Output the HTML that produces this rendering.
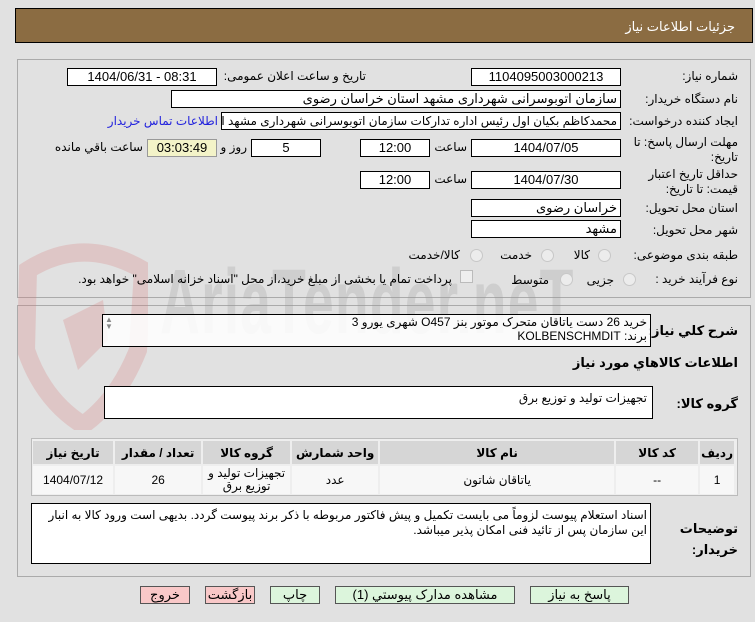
<!DOCTYPE html>
<html><head><meta charset="utf-8"><style>
body{margin:0;width:755px;height:622px;background:#e1e1e1;font-family:"Liberation Sans","DejaVu Sans",sans-serif;font-size:12px;color:#000;position:relative;overflow:hidden}
.a{position:absolute}
.box{position:absolute;background:#fff;border:1px solid #000;box-sizing:border-box;text-align:center;line-height:16px;font-size:13px}
.lbl{position:absolute;direction:rtl;white-space:nowrap;font-size:12px}
.rad{position:absolute;width:11px;height:11px;border-radius:50%;border:1px solid #c8c8c8;background:#ececec}
.btn{position:absolute;border:1px solid #555;box-sizing:border-box;text-align:center;line-height:16px;font-size:13px;background:#dcf5dc}
table{border-collapse:separate;border-spacing:2px}
td{text-align:center;font-size:12px}
</style></head><body>
<div class="a" style="left:15px;top:8px;width:738px;height:35px;background:#8b6c42;border:1px solid #000;box-sizing:border-box"></div>
<div class="lbl" style="right:20px;top:19px;color:#fff;font-size:13px">جزئیات اطلاعات نیاز</div>

<div class="a" style="left:17px;top:59px;width:734px;height:239px;border:1px solid #aaa;box-sizing:border-box"></div>
<div class="a" style="left:17px;top:305px;width:734px;height:272px;border:1px solid #aaa;box-sizing:border-box"></div>

<!-- watermark -->
<svg class="a" style="left:18px;top:240px" width="130" height="190" viewBox="0 0 130 190"><path d="M10 30 Q65 -5 125 30 L120 110 Q100 160 65 185 Q25 160 8 110 Z" fill="none" stroke="rgba(215,120,120,0.25)" stroke-width="18"/><path d="M45 80 L85 60 L90 100 L60 130 Z" fill="rgba(215,120,120,0.25)"/></svg>
<div class="a" style="left:160px;top:250px;font-size:92px;font-weight:bold;color:rgba(150,150,150,0.25);letter-spacing:2px;transform:scaleX(0.6);transform-origin:left;white-space:nowrap">AriaTender.neT</div>

<div class="lbl" style="right:17px;top:69px">شماره نیاز:</div>
<div class="box" style="left:471px;top:68px;width:150px;height:18px">1104095003000213</div>
<div class="lbl" style="right:389px;top:69px">تاریخ و ساعت اعلان عمومی:</div>
<div class="box" style="left:67px;top:68px;width:150px;height:18px">1404/06/31 - 08:31</div>

<div class="lbl" style="right:17px;top:92px">نام دستگاه خریدار:</div>
<div class="box" style="left:171px;top:90px;width:450px;height:18px;text-align:right;padding-right:3px">سازمان اتوبوسرانی شهرداری مشهد استان خراسان رضوی</div>

<div class="lbl" style="right:17px;top:114px">ایجاد کننده درخواست:</div>
<div class="box" style="left:221px;top:112px;width:400px;height:18px;text-align:right;padding-right:3px;overflow:hidden;white-space:nowrap;direction:rtl;font-size:12px">محمدکاظم بکیان اول رئیس اداره تدارکات سازمان اتوبوسرانی شهرداری مشهد استان</div>
<div class="lbl" style="right:537px;top:114px;color:#2222dd">اطلاعات تماس خریدار</div>

<div class="lbl" style="right:17px;top:135px;line-height:15px">مهلت ارسال پاسخ: تا<br>تاریخ:</div>
<div class="box" style="left:471px;top:139px;width:150px;height:18px">1404/07/05</div>
<div class="lbl" style="right:288px;top:140px">ساعت</div>
<div class="box" style="left:360px;top:139px;width:70px;height:18px">12:00</div>
<div class="box" style="left:251px;top:139px;width:70px;height:18px">5</div>
<div class="lbl" style="right:508px;top:140px">روز و</div>
<div class="box" style="left:147px;top:139px;width:70px;height:18px;background:#f3f3c8;border-color:#999">03:03:49</div>
<div class="lbl" style="right:612px;top:140px">ساعت باقي مانده</div>

<div class="lbl" style="right:17px;top:167px;line-height:15px">حداقل تاریخ اعتبار<br>قیمت: تا تاریخ:</div>
<div class="box" style="left:471px;top:171px;width:150px;height:18px">1404/07/30</div>
<div class="lbl" style="right:288px;top:172px">ساعت</div>
<div class="box" style="left:360px;top:171px;width:70px;height:18px">12:00</div>

<div class="lbl" style="right:17px;top:201px">استان محل تحویل:</div>
<div class="box" style="left:471px;top:199px;width:150px;height:18px;text-align:right;padding-right:3px">خراسان رضوی</div>
<div class="lbl" style="right:17px;top:223px">شهر محل تحویل:</div>
<div class="box" style="left:471px;top:220px;width:150px;height:18px;text-align:right;padding-right:3px">مشهد</div>

<div class="lbl" style="right:17px;top:248px">طبقه بندی موضوعی:</div>
<div class="rad" style="left:598px;top:249px"></div><div class="lbl" style="right:165px;top:248px">کالا</div>
<div class="rad" style="left:541px;top:249px"></div><div class="lbl" style="right:223px;top:248px">خدمت</div>
<div class="rad" style="left:470px;top:249px"></div><div class="lbl" style="right:295px;top:248px">کالا/خدمت</div>

<div class="lbl" style="right:17px;top:272px">نوع فرآیند خرید :</div>
<div class="rad" style="left:623px;top:273px"></div><div class="lbl" style="right:141px;top:273px">جزیی</div>
<div class="rad" style="left:560px;top:273px"></div><div class="lbl" style="right:206px;top:273px">متوسط</div>
<div class="a" style="left:460px;top:270px;width:11px;height:11px;border:1px solid #bbb;background:#eee"></div>
<div class="lbl" style="right:303px;top:272px">پرداخت تمام یا بخشی از مبلغ خرید،از محل "اسناد خزانه اسلامی" خواهد بود.</div>

<div class="lbl" style="right:17px;top:323px;font-weight:bold;font-size:13px">شرح کلي نياز:</div>
<div class="box" style="left:102px;top:314px;width:549px;height:33px;text-align:right;padding-right:3px;direction:rtl;line-height:14px;font-size:12px;background:rgba(255,255,255,0.85)">خرید 26 دست یاتاقان متحرک موتور بنز O457 شهری یورو 3<br>برند: KOLBENSCHMDIT</div>
<div class="a" style="left:105px;top:316px;color:#888;font-size:8px;line-height:7px">▲<br>▼</div>

<div class="lbl" style="right:17px;top:355px;font-weight:bold;font-size:13px">اطلاعات کالاهاي مورد نياز</div>
<div class="lbl" style="right:17px;top:396px;font-weight:bold;font-size:13px">گروه کالا:</div>
<div class="box" style="left:104px;top:386px;width:549px;height:33px;text-align:right;padding-right:5px;direction:rtl;padding-top:3px;font-size:12px">تجهیزات تولید و توزیع برق</div>

<div class="a" style="left:31px;top:438px;width:707px;height:58px;border:1px solid #bbb;box-sizing:border-box;background:#eee">
<table style="width:705px;direction:rtl;margin:0 -1px">
<tr style="height:23px;background:#d6d6d6;font-weight:bold"><td style="width:25px">ردیف</td><td style="width:80px">کد کالا</td><td style="width:232px">نام کالا</td><td style="width:84px">واحد شمارش</td><td style="width:85px">گروه کالا</td><td style="width:84px">تعداد / مقدار</td><td>تاریخ نیاز</td></tr>
<tr style="height:28px;background:#f7f7f7"><td>1</td><td>--</td><td>یاتاقان شاتون</td><td>عدد</td><td style="line-height:13px">تجهیزات تولید و<br>توزیع برق</td><td>26</td><td>1404/07/12</td></tr>
</table></div>

<div class="lbl" style="right:17px;top:518px;font-weight:bold;font-size:13px;line-height:21px;text-align:right">توضیحات<br>خریدار:</div>
<div class="box" style="left:31px;top:503px;width:620px;height:61px;text-align:right;padding:4px 3px 0 0;direction:rtl;line-height:15px;font-size:12px">اسناد استعلام پیوست لزوماً می بایست تکمیل و پیش فاکتور مربوطه با ذکر برند پیوست گردد. بدیهی است ورود کالا به انبار این سازمان پس از تائید فنی امکان پذیر میباشد.</div>

<div class="btn" style="left:140px;top:586px;width:50px;height:18px;background:#f9c8c8">خروج</div>
<div class="btn" style="left:205px;top:586px;width:50px;height:18px;background:#f9c8c8">بازگشت</div>
<div class="btn" style="left:270px;top:586px;width:50px;height:18px">چاپ</div>
<div class="btn" style="left:335px;top:586px;width:180px;height:18px">مشاهده مدارک پیوستي (1)</div>
<div class="btn" style="left:530px;top:586px;width:99px;height:18px">پاسخ به نیاز</div>
</body></html>
